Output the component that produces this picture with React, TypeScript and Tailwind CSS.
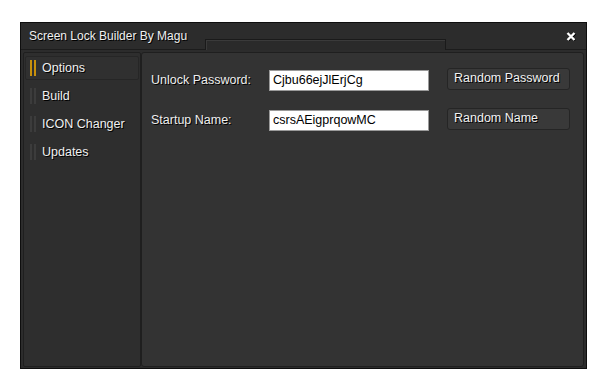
import React from 'react'

const navItems = [
  { label: 'Options', active: true },
  { label: 'Build', active: false },
  { label: 'ICON Changer', active: false },
  { label: 'Updates', active: false },
]

const fields = [
  { label: 'Unlock Password:', value: 'Cjbu66ejJlErjCg', button: 'Random Password' },
  { label: 'Startup Name:', value: 'csrsAEigprqowMC', button: 'Random Name' },
]

const shadow = '[text-shadow:1px_1px_0_#000]'

export default function App() {
  return (
    <div className="w-[604px] h-[385px] bg-white pt-[22px] pl-[20px] font-['Liberation_Sans',Arial,sans-serif]">
      <div className="w-[567px] h-[347px] border border-[#0e0e0e] bg-[#2c2c2c] flex flex-col">
        {/* title bar */}
        <div className="relative h-[27px] flex items-center pl-[8px] pr-[10px] border-b border-[#1c1c1c]">
          <span className={`text-[12px] text-[#f0f0f0] ${shadow}`}>Screen Lock Builder By Magu</span>
          <div className="absolute left-[184px] top-[16px] w-[241px] h-[11px] border border-b-0 border-[#1a1a1a] bg-[#2a2a2a] shadow-[inset_1px_1px_0_#3a3a3a]" />
          <svg className="ml-auto" width="10" height="9" viewBox="0 0 10 9">
            <path d="M1.5 1 L8.5 8 M8.5 1 L1.5 8" stroke="#000" strokeWidth="2.6" transform="translate(0.6 0.6)" />
            <path d="M1.5 1 L8.5 8 M8.5 1 L1.5 8" stroke="#fff" strokeWidth="2.4" />
          </svg>
        </div>

        {/* body */}
        <div className="flex-1 flex px-[2px] pt-[2px] pb-[1px]">
          <div className="w-[118px] border border-[#1f1f1f] bg-[#2e2e2e] rounded-[2px] pt-[3px] px-[1px] flex flex-col gap-[4px]">
            {navItems.map((item) => (
              <div
                key={item.label}
                className={
                  item.active
                    ? 'h-[24px] flex items-center pl-[4px] bg-[#303030] border border-[#262626] rounded-[2px]'
                    : 'h-[24px] flex items-center pl-[4px] border border-transparent'
                }
              >
                <div className="flex gap-[2px] h-[16px]">
                  <div className={item.active ? 'w-[2px] bg-[#c8900c]' : 'w-[2px] bg-[#3c3c3c]'} />
                  <div className={item.active ? 'w-[2px] bg-[#c8900c]' : 'w-[2px] bg-[#3c3c3c]'} />
                </div>
                <span className={`ml-[6px] text-[12.5px] text-[#f0f0f0] ${shadow}`}>{item.label}</span>
              </div>
            ))}
          </div>

          <div className="flex-1 border border-[#1f1f1f] bg-[#333333] rounded-[3px] pl-[9px] pt-[16px] flex flex-col gap-[18px]">
            {fields.map((f) => (
              <div key={f.label} className="flex items-center h-[22px]">
                <span className={`w-[118px] text-[12.5px] text-[#eeeeee] ${shadow}`}>{f.label}</span>
                <div className="w-[160px] h-[21px] bg-white border border-[#9a9a9a] flex items-center pl-[3px] text-[12.5px] text-black">
                  {f.value}
                </div>
                <div
                  className={`ml-[18px] w-[123px] h-[22px] -mt-[3px] rounded-[3px] bg-[#393939] border border-[#252525] flex items-center pl-[6px] text-[12.5px] text-[#f2f2f2] ${shadow}`}
                >
                  {f.button}
                </div>
              </div>
            ))}
          </div>
        </div>
      </div>
    </div>
  )
}
